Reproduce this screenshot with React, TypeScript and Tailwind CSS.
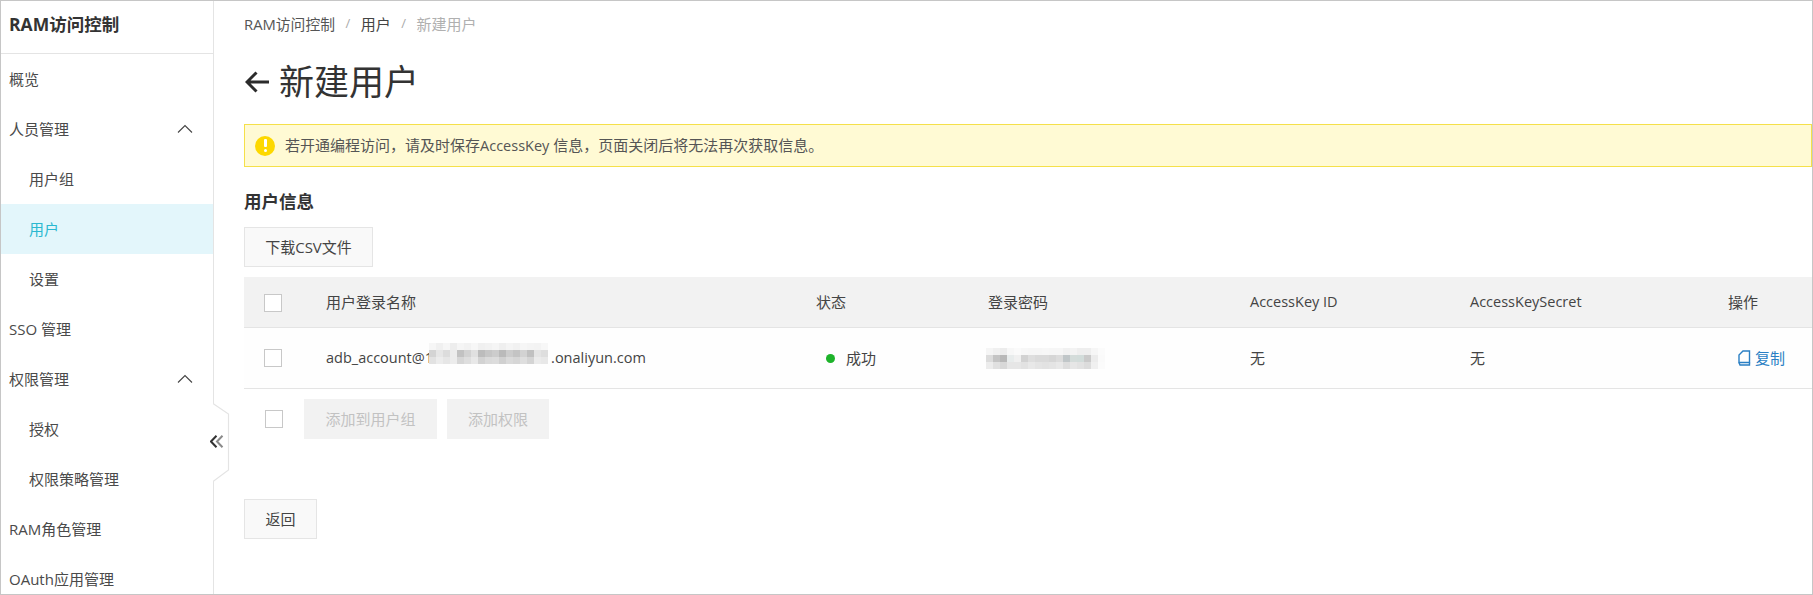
import React from "react";

const email = [
  ["#f6f6f6","#f0f0f0","#f6f6f6","#ededed","#f5f5f5","#f2f2f2","#f7f7f7","#f0f0f0","#f2f2f2","#f5f5f5","#efefef","#f4f4f4","#f1f1f1","#f6f6f6","#f4f4f4","#f3f3f3","#f7f7f7"],
  ["#d4d4d4","#e6e6e6","#dcdcdc","#ececec","#c2c2c2","#d2d2d2","#e0e0e0","#bcbcbc","#c6c6c6","#cccccc","#bababa","#cccccc","#c4c4c4","#d2d2d2","#c0c0c0","#e4e4e4","#dedede"],
  ["#e2e2e2","#ececec","#e6e6e6","#ececec","#d6d6d6","#dedede","#e8e8e8","#d2d2d2","#dadada","#dcdcdc","#d0d0d0","#dadada","#d6d6d6","#dedede","#d4d4d4","#ebebeb","#e8e8e8"],
];
const password = [
  ["#f5f5f5","#f0f0f0","#ececec","#f7f7f7","#fafafa","#f7f7f7","#f6f6f6","#f6f6f6","#f7f7f7","#f6f6f6","#f6f6f6","#f1f1f1","#f3f3f3","#eeeeee","#eeeeee","#f6f6f6","#fbfbfb"],
  ["#dcdcdc","#c4c4c4","#b8b8b8","#e8ecec","#f0f0f0","#d2d2d2","#dedede","#dadada","#dadada","#d6d6d6","#dcdcdc","#c0c6c8","#d4dcda","#d2dcda","#cacaca","#ececec","#fafafa"],
  ["#ececec","#e0e0e0","#d8d8d8","#e6e6e6","#e6e6e6","#e2e2e2","#e8e8e8","#e4e4e4","#e2e2e2","#e4e4e4","#e8e8e8","#dddddd","#e6e6e6","#e2e2e2","#dcdcdc","#f0f0f0","#fbfbfb"],
];

function Mosaic({ rows, cell }: { rows: string[][]; cell: number }) {
  return (
    <svg width={rows[0].length * cell} height={rows.length * cell} viewBox={`0 0 ${rows[0].length * cell} ${rows.length * cell}`} shapeRendering="crispEdges">
      {rows.map((r, y) => r.map((c, x) => <rect key={`${x}-${y}`} x={x * cell} y={y * cell} width={cell} height={cell} fill={c} />))}
    </svg>
  );
}

function Chevron() {
  return (
    <svg width="16" height="10" viewBox="0 0 16 10" fill="none" stroke="#444" strokeWidth="1.1">
      <path d="M1 8.5 L8 1.5 L15 8.5" />
    </svg>
  );
}

function NavItem({ label, sub, active, open }: { label: string; sub?: boolean; active?: boolean; open?: boolean }) {
  return (
    <div className={`h-[50px] shrink-0 flex items-center justify-between pr-[20px] ${sub ? "pl-[28px]" : "pl-[8px]"} ${active ? "bg-[#e3f6fb] text-[#2bb8d0]" : "text-[#4a4a4a]"}`}>
      <span>{label}</span>
      {open && <Chevron />}
    </div>
  );
}

function Box() {
  return <div className="w-[18px] h-[18px] border border-[#c8c8c8] bg-white" />;
}

const cols = "grid grid-cols-[82px_490px_172px_262px_220px_258px_1fr] items-center";

export default function App() {
  return (
    <div className="w-[1813px] h-[595px] border border-[#c6c6c6] flex overflow-hidden bg-white text-[15px] text-[#444] font-['Open_Sans','Noto_Sans_CJK_SC',sans-serif]">
      <aside className="relative w-[213px] shrink-0 border-r border-[#e4e4e4] flex flex-col">
        <div className="h-[53px] shrink-0 border-b border-[#e4e4e4] flex items-center pl-[8px] pb-[6px] text-[17.5px] font-bold text-[#333]">RAM访问控制</div>
        <NavItem label="概览" />
        <NavItem label="人员管理" open />
        <NavItem label="用户组" sub />
        <NavItem label="用户" sub active />
        <NavItem label="设置" sub />
        <NavItem label="SSO 管理" />
        <NavItem label="权限管理" open />
        <NavItem label="授权" sub />
        <NavItem label="权限策略管理" sub />
        <NavItem label="RAM角色管理" />
        <NavItem label="OAuth应用管理" />
        <svg className="absolute left-[212px] top-[402px] z-10" width="17" height="80" viewBox="0 0 17 80" fill="#fff" stroke="#e4e4e4" strokeWidth="1.2">
          <path d="M0 0.5 L15.5 11 L15.5 67 L0 78.5" />
        </svg>
        <svg className="absolute left-[209px] top-[434px] z-20" width="14" height="13" viewBox="0 0 14 13" fill="none" strokeWidth="2">
          <path d="M6.5 0.8 L1 6.5 L6.5 12.2" stroke="#333" />
          <path d="M12.5 0.8 L7 6.5 L12.5 12.2" stroke="#8a8a8a" />
        </svg>
      </aside>

      <main className="flex-1 min-w-0 pl-[30px] flex flex-col">
        <div className="h-[46px] shrink-0 flex items-center gap-[10.5px]">
          <span className="text-[#555] text-[14.8px]">RAM访问控制</span>
          <span className="text-[#aaa] text-[13px]">/</span>
          <span className="text-[#444]">用户</span>
          <span className="text-[#aaa] text-[13px]">/</span>
          <span className="text-[#b0b0b0]">新建用户</span>
        </div>

        <div className="h-[70px] shrink-0 flex items-center gap-[9px] mb-[7px]">
          <svg width="25" height="22" viewBox="0 0 25 22" fill="none" stroke="#2b2b2b" strokeWidth="3" className="ml-[1px]">
            <path d="M24 11 H3 M11.5 1.5 L2 11 L11.5 20.5" />
          </svg>
          <span className="text-[35px] text-[#333]">新建用户</span>
        </div>

        <div className="h-[43px] shrink-0 border border-[#f5e04a] bg-[#fffad4] flex items-center pl-[10px] gap-[10px]">
          <span className="relative w-[20px] h-[20px] rounded-full bg-[#fdd800] flex flex-col items-center justify-center gap-[2px]">
            <span className="w-[3px] h-[8px] bg-white rounded-[1px]" />
            <span className="w-[3px] h-[3px] bg-white rounded-full" />
          </span>
          <span className="text-[#555]">若开通编程访问，请及时保存<span className="text-[14.5px]">AccessKey</span> 信息，页面关闭后将无法再次获取信息。</span>
        </div>

        <div className="h-[34px] shrink-0 mt-[17px] flex items-center text-[17.5px] font-bold text-[#333]">用户信息</div>

        <button className="mt-[9px] w-[129px] h-[40px] shrink-0 border border-[#e5e5e5] bg-[#f9f9f9] text-[#444]">下载CSV文件</button>

        <div className={`${cols} mt-[10px] h-[51px] shrink-0 bg-[#f2f2f2] border-b border-[#e4e4e4]`}>
          <div className="pl-[20px] pt-[2px]"><Box /></div>
          <div>用户登录名称</div>
          <div>状态</div>
          <div>登录密码</div>
          <div className="text-[14.5px]">AccessKey ID</div>
          <div className="text-[14.5px]">AccessKeySecret</div>
          <div>操作</div>
        </div>

        <div className={`${cols} h-[61px] shrink-0 bg-[#fefefe] border-b border-[#e4e4e4]`}>
          <div className="pl-[20px]"><Box /></div>
          <div className="relative text-[14.5px]">
            adb_account@1<span className="inline-block w-[118px]" />.onaliyun.com
            <span className="absolute left-[103px] top-[-4px]"><Mosaic rows={email} cell={7} /></span>
          </div>
          <div className="flex items-center gap-[11px] pl-[10px]">
            <span className="w-[9px] h-[9px] rounded-full bg-[#1db32a]" />
            <span>成功</span>
          </div>
          <div className="relative h-[21px]">
            <span className="absolute left-[-2px] top-0"><Mosaic rows={password} cell={7} /></span>
          </div>
          <div>无</div>
          <div>无</div>
          <div className="flex items-center gap-[4px] pl-[9px] text-[#2a7fc4]">
            <svg width="14" height="16" viewBox="0 0 14 16" fill="none" stroke="#2a7fc4" strokeWidth="1.4">
              <path d="M2 12.5 V5 L6 1 H12.5 V12.5 Z" />
              <path d="M2 12.5 L3 15 H12.5 V12.5" />
            </svg>
            <span>复制</span>
          </div>
        </div>

        <div className="mt-[10px] h-[40px] shrink-0 flex items-center pl-[21px]">
          <Box />
          <button className="ml-[21px] w-[133px] h-[40px] bg-[#f2f2f2] text-[#c2c2c2]">添加到用户组</button>
          <button className="ml-[10px] w-[102px] h-[40px] bg-[#f2f2f2] text-[#c2c2c2]">添加权限</button>
        </div>

        <button className="mt-[60px] w-[73px] h-[40px] shrink-0 border border-[#e5e5e5] bg-[#f9f9f9] text-[#444]">返回</button>
      </main>
    </div>
  );
}
